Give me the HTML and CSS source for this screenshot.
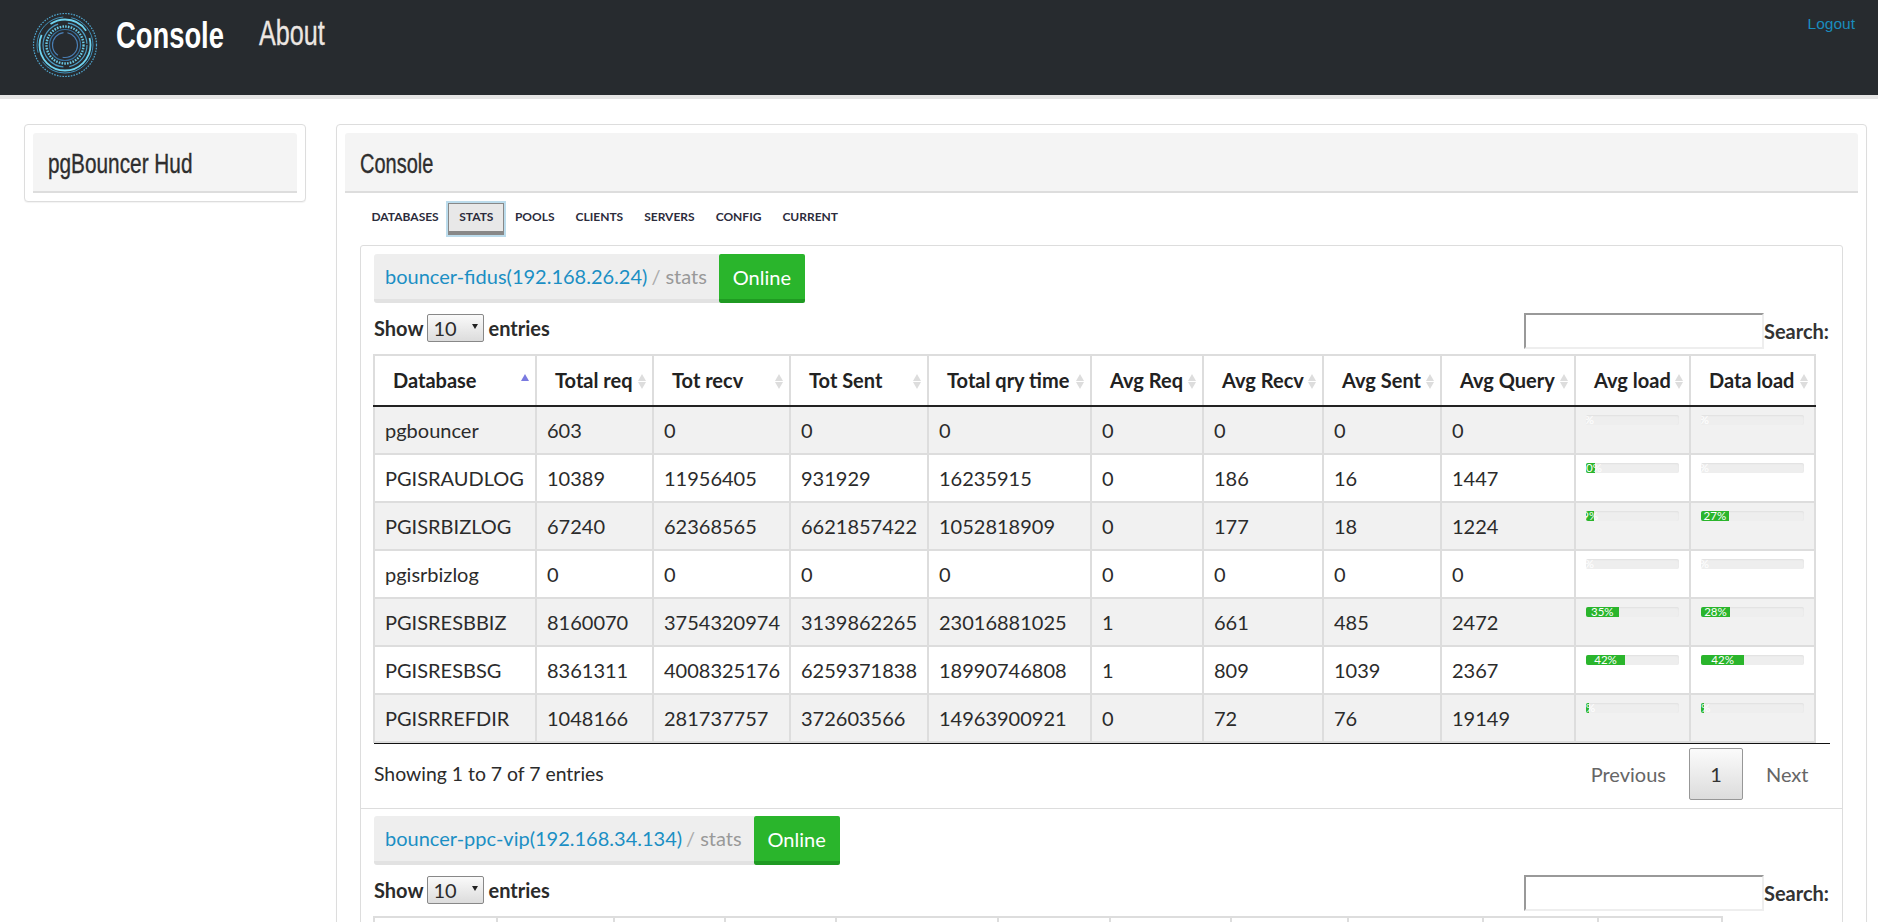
FILE: index.html
```html
<!DOCTYPE html>
<html lang="en">
<head>
<meta charset="utf-8">
<title>Console</title>
<link rel="stylesheet" href="styles.css">
</head>
<body>
<header class="topbar">
  <svg class="logo" width="66" height="66" viewBox="0 0 66 66" fill="none" aria-hidden="true">
    <circle cx="33" cy="33" r="31.5" stroke="#4fa6cf" stroke-width="1.2" stroke-dasharray="1.6 1.2"/>
    <circle cx="33" cy="33" r="28" stroke="#3f8fb8" stroke-width="1" stroke-dasharray="70 10 50 8"/>
    <circle cx="33" cy="33" r="25.5" stroke="#6fd3ee" stroke-width="1.8" stroke-dasharray="90 14 40 8"/>
    <circle cx="33" cy="33" r="22" stroke="#4c9cc4" stroke-width="1.2" stroke-dasharray="30 6 60 10"/>
    <circle cx="33" cy="33" r="18.5" stroke="#69c8e4" stroke-width="2.4" stroke-dasharray="1.6 1.2"/>
    <circle cx="33" cy="33" r="15.5" stroke="#37709c" stroke-width="1.2"/>
    <circle cx="33" cy="33" r="12.5" stroke="#4a7fb5" stroke-width="1.2" stroke-dasharray="22 5 30 4"/>
  </svg>
  <a class="brand" href="#">Console</a>
  <a class="about" href="#">About</a>
  <a class="logout" href="#">Logout</a>
</header>
<main class="layout">
  <aside class="panel side">
    <h2 class="panel-head"><span class="head-text hud">pgBouncer Hud</span></h2>
  </aside>
  <section class="panel content">
    <h2 class="panel-head"><span class="head-text con">Console</span></h2>
    <nav class="tabs">
      <a class="tab" href="#">Databases</a>
      <a class="tab active" href="#">Stats</a>
      <a class="tab" href="#">Pools</a>
      <a class="tab" href="#">Clients</a>
      <a class="tab" href="#">Servers</a>
      <a class="tab" href="#">Config</a>
      <a class="tab" href="#">Current</a>
    </nav>
    <div class="card">
      <div class="host">
        <div class="crumbs">
          <div class="crumb"><a href="#">bouncer-fidus(192.168.26.24)</a><span class="sep">/</span><span class="leaf">stats</span></div>
          <button class="online" type="button">Online</button>
        </div>
        <div class="controls">
          <label class="length">Show <span class="select-wrap"><select><option>10</option><option>25</option></select></span> entries</label>
          <label class="search"><input type="text" aria-label="Search">Search:</label>
        </div>
        <div class="table-wrap">
          <table class="grid grid-a">
            <colgroup><col class="a1"><col class="a2"><col class="a3"><col class="a4"><col class="a5"><col class="a6"><col class="a7"><col class="a8"><col class="a9"><col class="a10"><col class="a11"></colgroup>
            <thead>
              <tr><th class="sorted">Database</th><th>Total req</th><th>Tot recv</th><th>Tot Sent</th><th>Total qry time</th><th>Avg Req</th><th>Avg Recv</th><th>Avg Sent</th><th>Avg Query</th><th>Avg load</th><th>Data load</th></tr>
            </thead>
            <tbody>
              <tr><td>pgbouncer</td><td>603</td><td>0</td><td>0</td><td>0</td><td>0</td><td>0</td><td>0</td><td>0</td>
                <td class="load"><div class="bar"><div class="fill" style="width:0%">0%</div></div></td>
                <td class="load"><div class="bar"><div class="fill" style="width:0%">0%</div></div></td></tr>
              <tr><td>PGISRAUDLOG</td><td>10389</td><td>11956405</td><td>931929</td><td>16235915</td><td>0</td><td>186</td><td>16</td><td>1447</td>
                <td class="load"><div class="bar"><div class="fill" style="width:10%">10%</div></div></td>
                <td class="load"><div class="bar"><div class="fill" style="width:0%">0%</div></div></td></tr>
              <tr><td>PGISRBIZLOG</td><td>67240</td><td>62368565</td><td>6621857422</td><td>1052818909</td><td>0</td><td>177</td><td>18</td><td>1224</td>
                <td class="load"><div class="bar"><div class="fill" style="width:9%">9%</div></div></td>
                <td class="load"><div class="bar"><div class="fill" style="width:27%">27%</div></div></td></tr>
              <tr><td>pgisrbizlog</td><td>0</td><td>0</td><td>0</td><td>0</td><td>0</td><td>0</td><td>0</td><td>0</td>
                <td class="load"><div class="bar"><div class="fill" style="width:0%">0%</div></div></td>
                <td class="load"><div class="bar"><div class="fill" style="width:0%">0%</div></div></td></tr>
              <tr><td>PGISRESBBIZ</td><td>8160070</td><td>3754320974</td><td>3139862265</td><td>23016881025</td><td>1</td><td>661</td><td>485</td><td>2472</td>
                <td class="load"><div class="bar"><div class="fill" style="width:35%">35%</div></div></td>
                <td class="load"><div class="bar"><div class="fill" style="width:28%">28%</div></div></td></tr>
              <tr><td>PGISRESBSG</td><td>8361311</td><td>4008325176</td><td>6259371838</td><td>18990746808</td><td>1</td><td>809</td><td>1039</td><td>2367</td>
                <td class="load"><div class="bar"><div class="fill" style="width:42%">42%</div></div></td>
                <td class="load"><div class="bar"><div class="fill" style="width:42%">42%</div></div></td></tr>
              <tr><td>PGISRREFDIR</td><td>1048166</td><td>281737757</td><td>372603566</td><td>14963900921</td><td>0</td><td>72</td><td>76</td><td>19149</td>
                <td class="load"><div class="bar"><div class="fill" style="width:3%">3%</div></div></td>
                <td class="load"><div class="bar"><div class="fill" style="width:3%">3%</div></div></td></tr>
            </tbody>
          </table>
        </div>
        <div class="foot">
          <span class="info">Showing 1 to 7 of 7 entries</span>
          <div class="pager"><a class="page-link" href="#">Previous</a><a class="page-num" href="#">1</a><a class="page-link" href="#">Next</a></div>
        </div>
      </div>
      <div class="host">
        <div class="crumbs">
          <div class="crumb"><a href="#">bouncer-ppc-vip(192.168.34.134)</a><span class="sep">/</span><span class="leaf">stats</span></div>
          <button class="online" type="button">Online</button>
        </div>
        <div class="controls">
          <label class="length">Show <span class="select-wrap"><select><option>10</option><option>25</option></select></span> entries</label>
          <label class="search"><input type="text" aria-label="Search">Search:</label>
        </div>
        <div class="table-wrap">
          <table class="grid grid-b">
            <colgroup><col class="b1"><col class="b2"><col class="b3"><col class="b4"><col class="b5"><col class="b6"><col class="b7"><col class="b8"><col class="b9"><col class="b10"><col class="b11"></colgroup>
            <thead>
              <tr><th class="sorted">Database</th><th>Total req</th><th>Tot recv</th><th>Tot Sent</th><th>Total qry time</th><th>Avg Req</th><th>Avg Recv</th><th>Avg Sent</th><th>Avg Query</th><th>Avg load</th><th>Data load</th></tr>
            </thead>
          </table>
        </div>
      </div>
    </div>
  </section>
</main>
</body>
</html>
```
FILE: styles.css
```css
* { box-sizing: border-box; }
html, body { height: 100%; }
body {
  margin: 0;
  height: 922px;
  overflow: hidden;
  background: #fff;
  color: #2b2b2b;
  font-family: "Lato", "Liberation Sans", sans-serif;
  font-size: 20px;
}
a { text-decoration: none; color: inherit; }

.topbar {
  height: 99px;
  display: flex;
  align-items: flex-start;
  background: #272b2f;
  border-bottom: 4px solid #e5e5e5;
  padding-left: 32px;
}
.logo { margin-top: 12px; flex: none; }
.brand, .about {
  display: block;
  flex: none;
  font-family: "Liberation Sans", sans-serif;
  line-height: 36px;
  white-space: nowrap;
  transform-origin: left center;
}
.brand { width: 107px; margin: 18px 0 0 18px; color: #fff; font-size: 36px; font-weight: 700; transform: scaleX(.76); }
.about { width: 67px; margin: 15px 0 0 36px; color: #ece6e2; font-size: 35px; -webkit-text-stroke: .3px #ece6e2; transform: scaleX(.72); }
.logout {
  margin-left: auto;
  margin-right: 23px;
  margin-top: 15px;
  font-family: "Liberation Sans", sans-serif;
  font-size: 15.5px;
  line-height: 18px;
  color: #1a8cbd;
}

.layout {
  display: flex;
  align-items: flex-start;
  gap: 30px;
  padding: 25px 11px 0 24px;
}
.panel {
  border: 1px solid #ddd;
  border-radius: 4px;
  padding: 8px;
  background: #fff;
  box-shadow: 0 1px 1px rgba(0,0,0,.05);
}
.side { width: 282px; flex: none; }
.content { flex: 1; min-width: 0; }
.panel-head {
  margin: 0;
  height: 60px;
  padding-left: 15px;
  background: #f4f4f4;
  border-bottom: 2px solid #ddd;
  border-radius: 3px 3px 0 0;
  font-family: "Liberation Sans", sans-serif;
  font-size: 27px;
  font-weight: 400;
  line-height: 63px;
  color: #2e2e2e;
}
.head-text { display: block; white-space: nowrap; transform-origin: left center; -webkit-text-stroke: .35px #2e2e2e; }
.hud { transform: scaleX(.77); }
.con { transform: scaleX(.74); }

.tabs { display: flex; align-items: flex-start; height: 34px; margin: 9px 0 9px 16px; }
.tab {
  padding: 0 10.5px;
  font-size: 12px;
  font-weight: 700;
  text-transform: uppercase;
  color: #2c2c3c;
  line-height: 29px;
}
.tab.active {
  height: 32px;
  margin: 1px 0 0 -1px;
  padding: 0 10px;
  background: #e8e8e8;
  border: 1px solid #888;
  border-bottom: 4px solid #888;
  outline: 2px solid #bcdcec;
  line-height: 25px;
}

.card {
  margin: 0 15px;
  border: 1px solid #ddd;
  border-radius: 3px 3px 0 0;
}
.host { padding: 8px 12px 0 13px; }
.host + .host { border-top: 1px solid #ddd; padding-top: 7px; }

.crumbs { display: flex; height: 49px; }
.crumb {
  padding: 0 12px 4px 11px;
  background: #eee;
  border-bottom: 4px solid #e2e2e2;
  border-radius: 3px 0 0 3px;
  line-height: 45px;
}
.crumb a { color: #1b8fc4; }
.sep { margin: 0 5px 0 4px; color: #aaa; }
.leaf { color: #999; }
.online {
  width: 86px;
  border: 0;
  border-bottom: 4px solid #1f9a22;
  border-radius: 2px;
  background: #2ab52c;
  color: #fff;
  font: 20px "Lato", sans-serif;
  padding: 0;
}

.controls { display: flex; justify-content: space-between; align-items: flex-start; height: 36px; margin-top: 10px; }
.length { font-weight: 700; display: flex; align-items: center; gap: 4px; height: 28px; margin-top: 1px; }
.select-wrap { position: relative; display: block; }
.select-wrap::after {
  content: "";
  position: absolute;
  right: 6px;
  top: 10px;
  border: 3px solid transparent;
  border-top: 5px solid #222;
  border-bottom: 0;
  pointer-events: none;
}
select {
  display: block;
  appearance: none;
  -webkit-appearance: none;
  width: 57px;
  height: 28px;
  padding: 0 0 0 5px;
  border: 1px solid #888;
  border-radius: 2px;
  background: linear-gradient(#fafafa, #dcdcdc);
  font: 20px "Lato", sans-serif;
  color: #2b2b2b;
}
.search { font-weight: 700; display: flex; align-items: center; color: #333; margin-right: 1px; }
.search input {
  width: 240px;
  height: 36px;
  border: 2px solid;
  border-color: #999 #eee #eee #999;
  background: #fff;
  padding: 0;
}

.table-wrap { margin-top: 5px; border-bottom: 1px solid #111; }
.host:last-child .table-wrap { border-bottom: 0; }
.grid { border-collapse: collapse; table-layout: fixed; margin-left: -1px; }
.grid-a { width: 1441px; }
.grid-b { width: 1348px; }
.a1 { width: 162px; } .a2 { width: 117px; } .a3 { width: 137px; } .a4 { width: 138px; }
.a5 { width: 163px; } .a6 { width: 112px; } .a7 { width: 120px; } .a8 { width: 118px; }
.a9 { width: 134px; } .a10 { width: 115px; } .a11 { width: 125px; }
.b1 { width: 123px; } .b2 { width: 117px; } .b3 { width: 111px; } .b4 { width: 111px; }
.b5 { width: 162px; } .b6 { width: 112px; } .b7 { width: 121px; } .b8 { width: 117px; }
.b9 { width: 135px; } .b10 { width: 115px; } .b11 { width: 124px; }
.grid th, .grid td { border: 2px solid #ddd; white-space: nowrap; overflow: hidden; }
.grid th {
  position: relative;
  height: 51px;
  padding: 0 0 2px 18px;
  text-align: left;
  font-weight: 700;
  color: #222;
  border-bottom: 2px solid #222;
}
.grid th::before, .grid th::after {
  content: "";
  position: absolute;
  right: 6px;
  border-left: 4px solid transparent;
  border-right: 4px solid transparent;
}
.grid th::before { top: 18px; border-bottom: 7px solid #ddd; }
.grid th::after { top: 26px; border-top: 7px solid #ddd; }
.grid th.sorted::before { border-bottom-color: #7a7ae0; }
.grid th.sorted::after { display: none; }
.grid td { height: 48px; padding: 0 0 0 10px; color: #2b2b2b; }
.grid tbody tr:nth-child(odd) td { background: #f1f1f1; }
.grid td.load { vertical-align: top; padding: 8px 10px 0; }
.bar {
  display: flex;
  height: 10px;
  overflow: hidden;
  background: #eee;
  border-radius: 2px;
  box-shadow: inset 0 1px 2px rgba(0,0,0,.06);
}
.fill {
  display: flex;
  justify-content: center;
  flex: none;
  background: #2ab52c;
  color: #fff;
  font-size: 11.5px;
  line-height: 10px;
  white-space: nowrap;
}

.foot { display: flex; justify-content: space-between; align-items: center; height: 64px; padding-bottom: 4px; }
.info { font-size: 19.4px; margin-top: -2px; }
.pager { display: flex; align-items: center; margin-right: 21.5px; }
.page-link { color: #666; }
.page-num {
  width: 54px;
  height: 52px;
  margin: 0 23px 0 23px;
  text-align: center;
  line-height: 50px;
  border: 1px solid #979797;
  border-radius: 2px;
  background: linear-gradient(#fbfbfb, #dcdcdc);
  color: #333;
}
```
